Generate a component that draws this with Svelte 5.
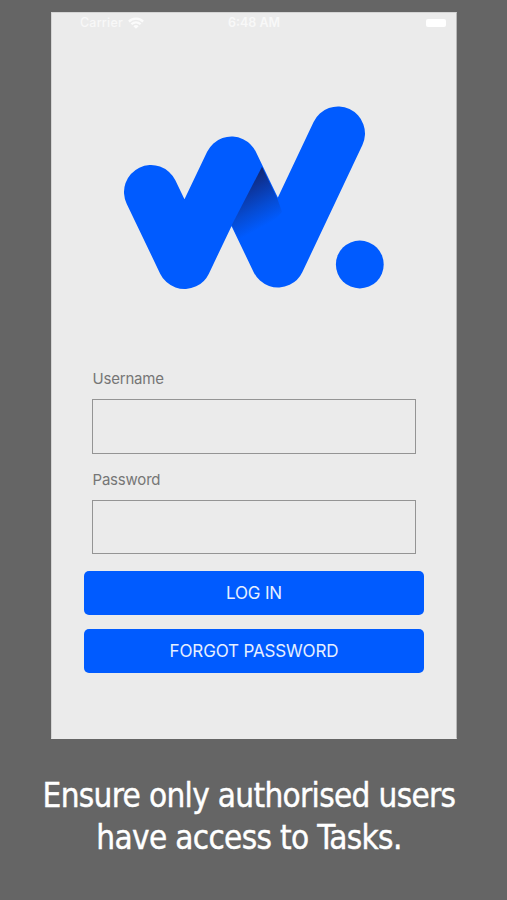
<script lang="ts">
  let username = $state('');
  let password = $state('');

  const captionLines = ['Ensure only authorised users', 'have access to Tasks.'];
</script>

<main>
  <section class="phone">
    <header class="status-bar">
      <span class="carrier">
        Carrier
        <svg class="wifi" viewBox="0 0 16 12" aria-hidden="true">
          <path d="M.9 4.6a10 10 0 0 1 14.2 0" />
          <path d="M3.4 7.2a6.5 6.5 0 0 1 9.2 0" />
          <path class="solid" d="M5.4 9.2a3.7 3.7 0 0 1 5.2 0L8 11.8z" />
        </svg>
      </span>
      <span class="time">6:48 AM</span>
      <span class="battery"></span>
    </header>

    <svg class="logo" viewBox="124 106 260 184" role="img" aria-label="W.">
      <defs>
        <linearGradient id="fold" gradientUnits="userSpaceOnUse" x1="258" y1="168" x2="284" y2="215">
          <stop offset="0" stop-color="#10256f" />
          <stop offset="0.3" stop-color="#0c36a0" />
          <stop offset="0.65" stop-color="#064bd2" />
          <stop offset="1" stop-color="#005bff" />
        </linearGradient>
      </defs>
      <path class="stroke" d="M151 192L184.5 262L231.5 163.5L278 260.5L338 133.5" />
      <path fill="url(#fold)" d="M262 166.8L277.4 198.8L282 212L246 254L231.8 225z" />
      <circle cx="359.8" cy="264.5" r="23.9" />
    </svg>

    <form onsubmit={(event) => event.preventDefault()}>
      <label for="username">Username</label>
      <input id="username" type="text" bind:value={username} />
      <label for="password">Password</label>
      <input id="password" type="password" bind:value={password} />
      <button type="submit">LOG IN</button>
      <button type="button">FORGOT PASSWORD</button>
    </form>
  </section>

  <p class="caption">
    {#each captionLines as line}<span>{line}</span>{/each}
  </p>
</main>

<style>
  :global(body) {
    background: #656565;
  }

  main {
    display: flex;
    box-sizing: border-box;
    width: 507px;
    height: 900px;
    flex-direction: column;
    align-items: center;
    overflow: hidden;
    background: #656565;
    padding: 12px 0 0 1px;
  }

  .phone {
    display: flex;
    box-sizing: border-box;
    width: 406px;
    height: 727px;
    flex: none;
    flex-direction: column;
    border: 1px solid #d4d4d4;
    border-right-color: #b8b8b8;
    border-bottom-color: #ebebeb;
    background: #ebebeb;
    font-family: Inter, "Liberation Sans", sans-serif;
  }

  .status-bar {
    display: grid;
    height: 20px;
    grid-template-columns: 1fr auto 1fr;
    align-items: center;
    color: #f8f8f8;
    font-size: 12.5px;
    font-weight: 500;
    line-height: 20px;
    padding: 0 10px 0 28px;
  }

  .carrier {
    display: flex;
    align-items: center;
    gap: 5px;
    letter-spacing: 0.2px;
  }

  .wifi {
    width: 16px;
    height: 12px;
    fill: none;
    stroke: #fbfbfb;
    stroke-width: 2.3;
  }

  .wifi .solid {
    fill: #fbfbfb;
    stroke: none;
  }

  .time {
    margin-right: 18px;
    font-weight: 600;
  }

  .battery {
    width: 20px;
    height: 8px;
    border-radius: 2px;
    background: #fff;
    justify-self: end;
  }

  .logo {
    width: 260px;
    height: 184px;
    margin: 73px 0 0 72px;
    fill: #005bff;
  }

  .logo .stroke {
    fill: none;
    stroke: #005bff;
    stroke-linecap: round;
    stroke-linejoin: round;
    stroke-width: 54;
  }

  form {
    display: flex;
    flex-direction: column;
    margin: 79px 32px 0;
  }

  label {
    height: 20px;
    margin-left: 8.5px;
    color: #767676;
    font-size: 15px;
    letter-spacing: -0.2px;
    line-height: 20px;
  }

  input {
    box-sizing: border-box;
    height: 55px;
    border: 1px solid #949494;
    border-radius: 0;
    background: transparent;
    font: inherit;
    margin: 10px 8px 16px;
    outline: none;
    padding: 0 12px;
  }

  #password {
    height: 54px;
    margin-bottom: 17px;
  }

  button {
    height: 44px;
    border: 0;
    border-radius: 5px;
    background: #005bff;
    color: #e6efff;
    font-family: inherit;
    font-size: 17px;
    letter-spacing: -0.15px;
    padding: 0;
  }

  button + button {
    margin-top: 14px;
  }

  .caption {
    display: flex;
    flex-direction: column;
    align-items: center;
    color: #fff;
    font-family: "DejaVu Sans Condensed", "DejaVu Sans", sans-serif;
    font-size: 33px;
    font-stretch: condensed;
    letter-spacing: -0.67px;
    line-height: 42px;
    margin: 36px 0 0;
    white-space: nowrap;
    -webkit-text-stroke: 0.4px #fff;
  }

  .caption span {
    margin-right: 10px;
  }
</style>
